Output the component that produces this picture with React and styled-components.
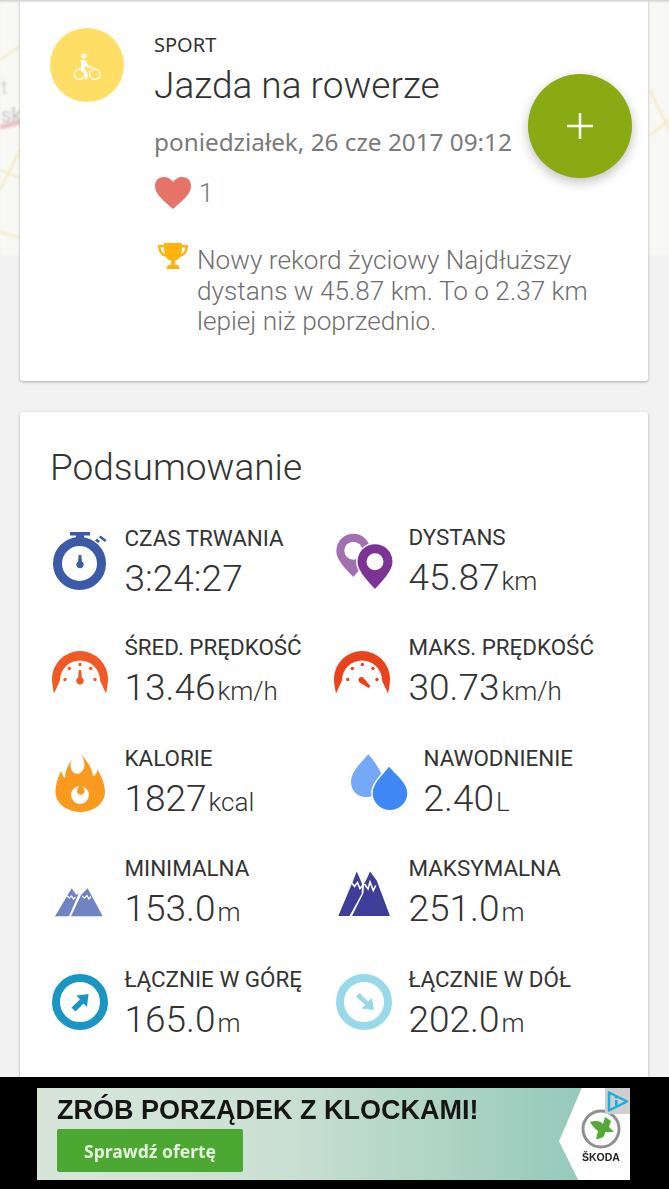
import React from 'react';
import styled, { createGlobalStyle } from 'styled-components';

const stats = [
  { icon: 'watch', label: 'CZAS TRWANIA', value: '3:24:27' },
  { icon: 'pins', label: 'DYSTANS', value: '45.87', unit: 'km' },
  { icon: 'avgSpeed', label: 'ŚRED. PRĘDKOŚĆ', value: '13.46', unit: 'km/h' },
  { icon: 'maxSpeed', label: 'MAKS. PRĘDKOŚĆ', value: '30.73', unit: 'km/h' },
  { icon: 'flame', label: 'KALORIE', value: '1827', unit: 'kcal' },
  { icon: 'drops', label: 'NAWODNIENIE', value: '2.40', unit: 'L', indent: true },
  { icon: 'minHeight', label: 'MINIMALNA', value: '153.0', unit: 'm' },
  { icon: 'maxHeight', label: 'MAKSYMALNA', value: '251.0', unit: 'm' },
  { icon: 'up', label: 'ŁĄCZNIE W GÓRĘ', value: '165.0', unit: 'm' },
  { icon: 'down', label: 'ŁĄCZNIE W DÓŁ', value: '202.0', unit: 'm' },
];

const arch = 'M2 36A28 28 0 0 1 58 36C58 41 57 46 56 50.500L50 37.500A20 20 0 0 0 10 37.500L4 50.500C3 46 2 41 2 36Z';

const icons = {
  watch: (
    <svg width="60" height="60" viewBox="0 0 60 60">
      <circle cx="29.500" cy="31.500" r="22" fill="none" stroke="#3d5aa8" strokeWidth="9" />
      <path d="M20 0h20v3.500h-6V6h-8V3.500h-6z" fill="#3d5aa8" />
      <path d="M50.500 3.500l6 4.500-1.500 2-6-4.500zM47 6.500l3 2.500-2 2-3-2.500z" fill="#3d5aa8" />
      <path d="M28.700 23h2.600l.6 6.500a3.700 3.700 0 1 1-3.800 0z" fill="#3d5aa8" />
    </svg>
  ),
  pins: (
    <svg width="60" height="60" viewBox="0 0 60 60">
      <path d="M2.300 18.700A17 17 0 1 1 36.300 18.700C36.300 28 26 37 19.300 45C12 37 2.300 28 2.300 18.700Z" fill="#a26fb0" />
      <circle cx="19.300" cy="18.700" r="9" fill="#fff" />
      <path
        d="M23.500 29.700A17.500 17.500 0 1 1 58.500 29.700C58.500 39 48 49 41 57C34 49 23.500 39 23.500 29.700Z"
        fill="#7b3397"
        stroke="#fff"
        strokeWidth="3"
        paintOrder="stroke"
      />
      <circle cx="41" cy="29.700" r="8.500" fill="#fff" />
    </svg>
  ),
  avgSpeed: (
    <svg width="60" height="60" viewBox="0 0 60 60" fill="#f15a24">
      <path d={arch} />
      <circle cx="19.300" cy="25.500" r="1.700" />
      <circle cx="30" cy="21.500" r="1.700" />
      <circle cx="40.700" cy="25.500" r="1.700" />
      <circle cx="15" cy="36.500" r="1.700" />
      <circle cx="45" cy="36.500" r="1.700" />
      <path d="M28.800 27h2.400l.6 7.500a3.800 3.800 0 1 1-3.600 0z" />
    </svg>
  ),
  maxSpeed: (
    <svg width="60" height="60" viewBox="0 0 60 60" fill="#e8431c">
      <g transform="translate(-2 0)">
        <path d={arch} />
        <circle cx="15.700" cy="36.500" r="1.700" />
        <circle cx="20.300" cy="25.500" r="1.700" />
        <circle cx="30.300" cy="21.500" r="1.700" />
        <circle cx="41" cy="25.500" r="1.700" />
        <circle cx="45" cy="36.500" r="1.700" />
        <path d="M27 35a3.300 3.300 0 0 1 5 .5l6.500 7.500-2 2-8-5a3.300 3.300 0 0 1-1.500-5z" />
      </g>
    </svg>
  ),
  flame: (
    <svg width="60" height="60" viewBox="0 0 60 60">
      <path
        fill="#f9991d"
        d="M30 0C34 5 39 10 41 16C42 19 43 21 43 23.500C46 22 47 19 47.300 16.500C51 22 55 31 55 39C55 50 44 59 30.500 59C17 59 5.500 50 5.500 39C5.500 32 8 24 11.300 18C12 20 13 24 15 25C15 18 18 12 22 7C20 11 20 16 23 19C26 22 31 21 33 17C36 12 34 5 30 0Z"
      />
      <circle cx="30" cy="42" r="9" fill="#fff" />
      <path d="M30 31C33 34 36 37 34 40C32 43 27 42 27 38C27 36 29 34 30 31Z" fill="#f9991d" />
    </svg>
  ),
  drops: (
    <svg width="60" height="60" viewBox="0 0 60 60">
      <path d="M19.300 1.300C13 9 2 18 2 29C2 38 9 44 17 44C28 44 34 36 34 29C34 20 26 9 19.300 1.300Z" fill="#75a8f6" />
      <path
        d="M40 13.700C34 22 23.700 30 23.700 40C23.700 50 32 57 41 57C50 57 58.300 50 58.300 40C58.300 30 47 22 40 13.700Z"
        fill="#3e87f5"
        stroke="#fff"
        strokeWidth="3"
        paintOrder="stroke"
      />
    </svg>
  ),
  minHeight: (
    <svg width="60" height="60" viewBox="0 0 60 60">
      <path d="M5 52.200L21.700 24.200L26 30.500L28.500 30L19 52.200Z" fill="#7084c4" />
      <path d="M21 52.200L31 31L37.700 24.200L52.700 52.200Z" fill="#7084c4" />
      <path d="M17 32l2.500 2 2-2 2 3 2-2" fill="none" stroke="#fff" strokeWidth="1.300" />
      <path d="M32 32l2.500 2 2.500-2.500 2 3.500 2-2.500" fill="none" stroke="#fff" strokeWidth="1.300" />
    </svg>
  ),
  maxHeight: (
    <svg width="60" height="60" viewBox="0 0 60 60">
      <path d="M4.300 52L19 17L22.700 7.500L26 15L28 20L27.700 29.800L15.500 52Z" fill="#3e3d98" />
      <path d="M18 52L29.500 29L30 20L32.700 15L36 7.500L42.700 16.500L56 52Z" fill="#3e3d98" />
      <path d="M18 19l2.500 3.500 3-4 2.500 6 2.500-3" fill="none" stroke="#fff" strokeWidth="1.600" />
      <path d="M30.500 20l3.500 5 2-7 3.300 8.500 2.400-5" fill="none" stroke="#fff" strokeWidth="1.600" />
    </svg>
  ),
  up: (
    <svg width="60" height="60" viewBox="0 0 60 60">
      <circle cx="30" cy="28" r="24" fill="none" stroke="#1a96c5" strokeWidth="8" />
      <path d="M38.500 20L26.500 21.500L30 25.500L21.500 33.500L25.500 37.500L33.500 29.500L37 33Z" fill="#1a96c5" />
    </svg>
  ),
  down: (
    <svg width="60" height="60" viewBox="0 0 60 60">
      <circle cx="30" cy="28" r="24" fill="none" stroke="#97d9e9" strokeWidth="8" />
      <path d="M40 36L27.500 34.500L31 31L22 22.500L25.500 19L34 27.500L38 24Z" fill="#97d9e9" />
    </svg>
  ),
};

export default function App() {
  return (
    <>
      <GlobalStyle />
      <Page>
        <Content>
          <MapLayer aria-hidden="true">
            <svg width="669" height="255" viewBox="0 0 669 255">
              <g fill="none" strokeWidth="2" stroke="#f5e9c0">
                <path d="M0 60 L20 46" />
                <path d="M0 190 L20 150 M0 170 L20 178 M0 232 L20 238" />
                <path d="M650 90 L669 130 M650 135 L669 120" />
              </g>
              <path d="M0 127 L20 122" stroke="#ecc3c3" strokeWidth="5" />
              <text x="1" y="94" fontSize="20" fill="#d5d5d5" fontFamily="Roboto">t</text>
              <text x="1" y="122" fontSize="20" fill="#c4c4c4" fontFamily="Roboto">sk</text>
            </svg>
          </MapLayer>
          <TopCard>
            <TypeBadge>
              <svg width="74" height="74" viewBox="0 0 74 74">
                <circle cx="34" cy="28" r="2.600" fill="#fff" />
                <path d="M31 32h4l3.500 5.500 4 1v2l-5-1-2-2-1 4 3 3v6.500h-2.500v-5.500l-4-3z" fill="#fff" />
                <circle cx="29.500" cy="46.300" r="5.200" fill="none" stroke="#fff" strokeWidth="1.300" />
                <circle cx="44.800" cy="46.300" r="5.200" fill="none" stroke="#fff" strokeWidth="1.300" />
              </svg>
            </TypeBadge>
            <TopText>
              <Category>SPORT</Category>
              <Title>Jazda na rowerze</Title>
              <DateLine>poniedziałek, 26 cze 2017 09:12</DateLine>
              <Likes>
                <svg width="38" height="34" viewBox="0 0 38 34">
                  <path d="M19 33C9 24 1 18 1 10 1 4 5 1 10 1c4 0 7 2 9 5 2-3 5-5 9-5 5 0 9 3 9 9 0 8-8 14-18 23z" fill="#e57368" />
                </svg>
                <LikeCount>1</LikeCount>
              </Likes>
              <Record>
                <svg width="32" height="28" viewBox="0 0 32 28">
                  <path
                    fillRule="evenodd"
                    fill="#ffb30f"
                    d="M7 1h18v2h6c0 7-3 11-8 12-1 2-3 3-5 4v4h3l2 4H9l2-4h3v-4c-2-1-4-2-5-4C4 14 1 10 1 3h6zM3.500 5.500c.5 3 2 5.500 4.500 6.500-.5-2-1-4-1-6.500zm25 0h-3.500c0 2.500-.5 4.500-1 6.500 2.500-1 4-3.500 4.500-6.500z"
                  />
                </svg>
                <RecordText>Nowy rekord życiowy Najdłuższy dystans w 45.87 km. To o 2.37 km lepiej niż poprzednio.</RecordText>
              </Record>
            </TopText>
            <Fab>
              <svg width="28" height="28" viewBox="0 0 28 28">
                <path d="M14 1v26M1 14h26" stroke="#fff" strokeWidth="2.500" />
              </svg>
            </Fab>
          </TopCard>
          <SummaryCard>
            <Heading>Podsumowanie</Heading>
            <StatGrid>
              {stats.map((s) => (
                <Stat key={s.label} $indent={s.indent}>
                  {icons[s.icon]}
                  <StatText>
                    <StatLabel>{s.label}</StatLabel>
                    <StatValue>
                      {s.value}
                      {s.unit && <Unit>{s.unit}</Unit>}
                    </StatValue>
                  </StatText>
                </Stat>
              ))}
            </StatGrid>
          </SummaryCard>
        </Content>
        <AdBar>
          <Banner>
            <AdMain>
              <AdTitle>ZRÓB PORZĄDEK Z KLOCKAMI!</AdTitle>
              <AdButton>Sprawdź ofertę</AdButton>
            </AdMain>
            <BrandPanel>
              <svg width="40" height="40" viewBox="0 0 40 40">
                <circle cx="20" cy="20" r="18" fill="#fff" stroke="#8f8f8f" strokeWidth="3" />
                <path d="M9 13C15 11 20 12 22 15L24 8L30 12L28 18L33 23L24 23C24 28 20 30 15 30L17 22C14 20 11 16 9 13Z" fill="#55a936" />
              </svg>
              <BrandName>ŠKODA</BrandName>
            </BrandPanel>
            <AdInfo>
              <svg width="22" height="23" viewBox="0 0 22 23">
                <path d="M2 2.500L20 11.500L2 20.500Z" fill="none" stroke="#19aee0" strokeWidth="2.500" strokeLinejoin="round" />
                <path d="M8 10h2.500v6.500H8zM8 6h2.500v2.500H8z" fill="#19aee0" />
              </svg>
            </AdInfo>
          </Banner>
        </AdBar>
      </Page>
    </>
  );
}

const GlobalStyle = createGlobalStyle`
  html, body {
    margin: 0;
    padding: 0;
    background: #f2f2f2;
  }
  * {
    box-sizing: border-box;
  }
  svg {
    display: block;
    flex-shrink: 0;
  }
`;

const Page = styled.div`
  width: 669px;
  height: 1189px;
  display: flex;
  flex-direction: column;
  overflow: hidden;
  font-family: Roboto, sans-serif;
`;

const Content = styled.div`
  position: relative;
  flex: 1;
  min-height: 0;
  overflow: hidden;
  padding: 0 21px 0 20px;
  display: flex;
  flex-direction: column;
  gap: 31px;
  background: #f2f2f2;

  &::before {
    content: '';
    position: absolute;
    z-index: 2;
    left: 0;
    right: 0;
    top: 0;
    height: 3px;
    background: linear-gradient(#cfcfcf, rgba(210, 210, 210, 0));
  }
`;

const MapLayer = styled.div`
  position: absolute;
  left: 0;
  top: 0;
  width: 669px;
  height: 255px;
  background: #f8f8f4;
  filter: blur(1px);
`;

const Card = styled.section`
  position: relative;
  background: #fff;
  border-radius: 3px;
  box-shadow: 0 1px 3px rgba(0, 0, 0, 0.3);
`;

const TopCard = styled(Card)`
  flex-shrink: 0;
  height: 385px;
  margin-top: -4px;
  padding: 32px 30px 0 30px;
  display: flex;
  gap: 30px;
`;

const TypeBadge = styled.div`
  width: 74px;
  height: 74px;
  border-radius: 50%;
  background: #ffde66;
  flex-shrink: 0;
`;

const TopText = styled.div`
  flex: 1;
  min-width: 0;
  padding-top: 3px;
`;

const Category = styled.div`
  font-family: 'Noto Sans', sans-serif;
  font-size: 20px;
  line-height: 28px;
  color: #333;
`;

const Title = styled.h1`
  margin: 0;
  font-weight: 300;
  font-size: 37px;
  line-height: 54px;
  color: #333;
  white-space: nowrap;
`;

const DateLine = styled.div`
  margin-top: 11px;
  font-family: 'Noto Sans', sans-serif;
  font-size: 24.3px;
  line-height: 36px;
  color: #7a7a7a;
  white-space: nowrap;
`;

const Likes = styled.div`
  margin-top: 16px;
  display: flex;
  align-items: center;
  gap: 7px;
`;

const LikeCount = styled.span`
  font-weight: 300;
  font-size: 26px;
  line-height: 30px;
  color: #777;
`;

const Record = styled.div`
  margin-top: 32px;
  padding-left: 3px;
  display: flex;
  gap: 8px;
`;

const RecordText = styled.p`
  margin: 3px 0 0;
  width: 410px;
  font-weight: 300;
  font-size: 26.2px;
  line-height: 30.5px;
  color: #6f6f6f;
`;

const Fab = styled.div`
  position: absolute;
  left: 508px;
  top: 78px;
  width: 104px;
  height: 104px;
  border-radius: 50%;
  background: #89aa12;
  box-shadow: 0 4px 12px rgba(0, 0, 0, 0.25);
  display: flex;
  align-items: center;
  justify-content: center;
`;

const SummaryCard = styled(Card)`
  flex: 1 0 auto;
  margin-bottom: -6px;
  padding: 31px 0 0 30px;
`;

const Heading = styled.h2`
  margin: 0 0 14px;
  font-weight: 300;
  font-size: 37px;
  line-height: 50px;
  color: #333;
`;

const StatGrid = styled.div`
  display: grid;
  grid-template-columns: 284px 284px;
  grid-auto-rows: 110.5px;
`;

const Stat = styled.div`
  display: flex;
  align-items: center;
  gap: 14.500px;
  padding-left: ${(p) => (p.$indent ? '15px' : '0')};
`;

const StatText = styled.div`
  min-width: 0;
  padding-top: 3px;
`;

const StatLabel = styled.div`
  font-size: 22.4px;
  line-height: 26px;
  margin-bottom: 5px;
  color: #333;
  white-space: nowrap;
`;

const StatValue = styled.div`
  font-weight: 300;
  font-size: 37px;
  line-height: 46px;
  color: #333;
  white-space: nowrap;
`;

const Unit = styled.span`
  font-size: 26px;
  margin-left: 2px;
`;

const AdBar = styled.div`
  height: 112px;
  flex-shrink: 0;
  background: #000;
  padding: 11px 39px 9px 37px;
`;

const Banner = styled.div`
  position: relative;
  height: 92px;
  overflow: hidden;
  background: linear-gradient(90deg, #d8e6da 0%, #cbe0d3 40%, #8dc6b6 100%);
  filter: blur(0.6px);
`;

const AdMain = styled.div`
  padding: 7px 0 0 20px;
`;

const AdTitle = styled.div`
  font-family: 'Liberation Sans', sans-serif;
  font-weight: 700;
  font-size: 27px;
  line-height: 30px;
  color: #151515;
  white-space: nowrap;
`;

const AdButton = styled.div`
  margin-top: 4px;
  width: 186px;
  height: 43px;
  border-radius: 2px;
  background: #4ca832;
  display: flex;
  align-items: center;
  justify-content: center;
  font-family: 'Noto Sans', sans-serif;
  font-weight: 700;
  font-size: 17.500px;
  color: #e6f4df;
`;

const BrandPanel = styled.div`
  position: absolute;
  right: 0;
  top: 0;
  bottom: 0;
  width: 71px;
  background: #fff;
  clip-path: polygon(32% 0, 100% 0, 100% 100%, 27% 100%, 0 58%);
  display: flex;
  flex-direction: column;
  align-items: center;
  gap: 2px;
  padding: 21px 0 0 13px;
`;

const BrandName = styled.div`
  font-family: 'Liberation Sans', sans-serif;
  font-weight: 700;
  font-size: 10.500px;
  line-height: 12px;
  color: #222;
`;

const AdInfo = styled.div`
  position: absolute;
  right: 0;
  top: 0;
  width: 25px;
  height: 26px;
  background: #cfcfcf;
  display: flex;
  align-items: center;
  justify-content: center;
`;
